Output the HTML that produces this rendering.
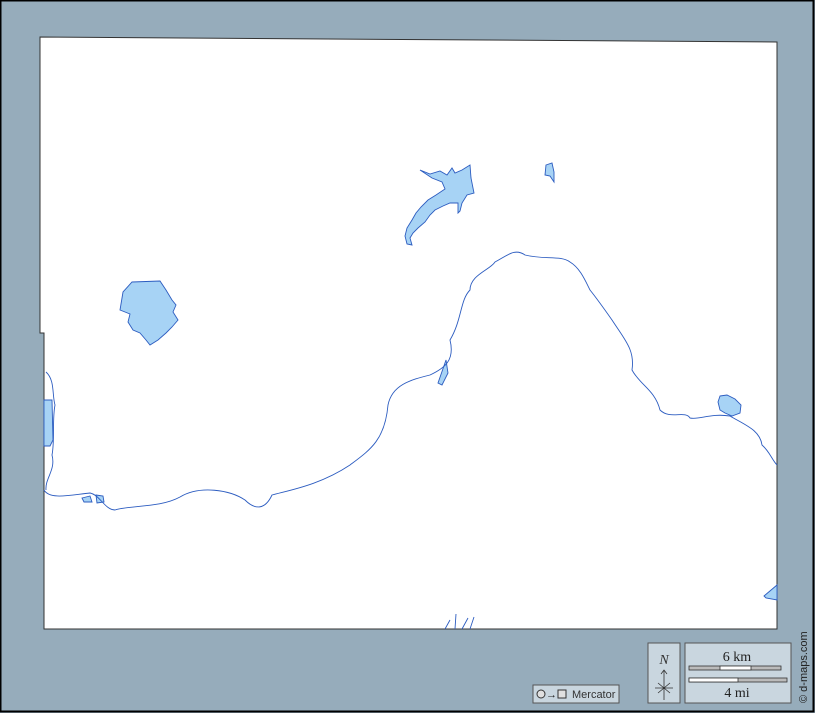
<!DOCTYPE html>
<html><head><style>
html,body{margin:0;padding:0;background:#96acbb}
svg{display:block}
text{font-family:"Liberation Serif",serif}
</style></head><body>
<svg width="815" height="713" viewBox="0 0 815 713" xmlns="http://www.w3.org/2000/svg">
<rect x="0.5" y="0.5" width="813" height="711" fill="#96acbb" stroke="#000" stroke-width="2"/>
<polygon points="40,37 777,42 777,629 44,629 44,333 40,333" fill="#fff" stroke="#333" stroke-width="1"/>
<g fill="#a7d3f5" stroke="#2c5cc0" stroke-width="0.9">
<path d="M120,310 L123,292 L132,282 L160,281 L166,290 L172,300 L176,305 L173,312 L178,320 L172,327 L166,333 L158,340 L150,345 L146,340 L140,333 L133,330 L128,322 L130,314 Z"/>
<path d="M420,170 L430,174 L440,171 L447,175 L452,168 L455,173 L462,170 L470,165 L471,178 L474,193 L467,195 L462,203 L460,211 L458,213 L458,203 L450,203 L443,206 L435,210 L430,215 L425,222 L418,228 L413,233 L410,238 L412,245 L407,244 L405,236 L407,228 L412,220 L416,213 L421,207 L428,200 L436,195 L445,189 L442,182 L432,178 Z"/>
<path d="M546,165 L552,163 L554,172 L554,182 L550,176 L545,175 Z"/>
<path d="M720,396 L727,395 L735,399 L741,405 L740,413 L732,416 L725,413 L720,410 L718,402 Z"/>
<path d="M44,400 L52,400 L53,440 L50,446 L44,446 Z"/>
<path d="M764,596 L777,585 L777,600 L766,598 Z"/>
<path d="M82,498 L90,496 L92,502 L84,502 Z"/>
<path d="M96,495 L103,496 L104,502 L97,503 Z"/>
<path d="M438,383 L446,360 L448,373 L442,385 Z"/>
</g>
<path d="M44,490 C50,500 70,495 90,493 C100,495 105,510 115,510 C130,505 160,508 180,497 C200,485 230,490 245,500 C255,510 265,510 272,495 C290,490 320,485 350,465 C370,450 385,440 388,405 C392,385 410,380 430,375 C445,368 455,360 450,340 C462,320 460,300 470,290 C470,275 490,270 495,262 C508,255 515,248 525,255 C545,260 560,255 570,262 C580,268 585,280 590,290 C598,300 605,310 612,320 C625,340 635,350 632,370 C640,385 655,390 660,410 C670,420 685,410 690,418 C700,420 710,413 730,416 C745,425 760,430 762,445 C770,452 772,460 777,465" fill="none" stroke="#2c5cc0" stroke-width="0.9"/>
<path d="M46,372 C55,380 52,395 55,405 C52,420 55,440 52,455 C56,470 45,478 46,490" fill="none" stroke="#2c5cc0" stroke-width="0.9"/>
<path d="M445,629 L450,620 M455,629 L456,614 M462,629 L468,618 M470,629 L474,617" stroke="#2c5cc0" stroke-width="0.9"/>
<rect x="533" y="685" width="86" height="18" fill="#c9d6df" stroke="#555"/>
<circle cx="541" cy="694" r="4" fill="#e0e0e0" stroke="#333"/>
<text x="546" y="698" font-size="11" style="font-family:'Liberation Sans',sans-serif" fill="#222">→</text>
<rect x="558" y="690" width="8" height="8" fill="#e0e0e0" stroke="#333"/>
<text x="572" y="698" font-size="11" style="font-family:'Liberation Sans',sans-serif" fill="#333">Mercator</text>
<rect x="648" y="643" width="32" height="60" fill="#c9d6df" stroke="#555"/>
<text x="664" y="664" font-size="14" font-style="italic" text-anchor="middle" fill="#333">N</text>
<path d="M664,700 L664,670 M661,674 L664,670 L667,674 M658,683 L670,693 M670,683 L658,693 M655,688 L673,688" stroke="#333" stroke-width="0.8" fill="none"/>
<rect x="685" y="643" width="106" height="60" fill="#c9d6df" stroke="#555"/>
<text x="737" y="661" font-size="14" text-anchor="middle" fill="#222">6 km</text>
<rect x="689" y="666" width="92" height="4" fill="#bbb" stroke="#333" stroke-width="0.8"/>
<rect x="720" y="666" width="31" height="4" fill="#fff" stroke="#333" stroke-width="0.8"/>
<rect x="689" y="678" width="98" height="4" fill="#bbb" stroke="#333" stroke-width="0.8"/>
<rect x="689" y="678" width="49" height="4" fill="#fff" stroke="#333" stroke-width="0.8"/>
<text x="737" y="697" font-size="14" text-anchor="middle" fill="#222">4 mi</text>
<text transform="translate(807,703) rotate(-90)" font-size="11" style="font-family:'Liberation Sans',sans-serif" fill="#222">© d-maps.com</text>
</svg>
</body></html>
